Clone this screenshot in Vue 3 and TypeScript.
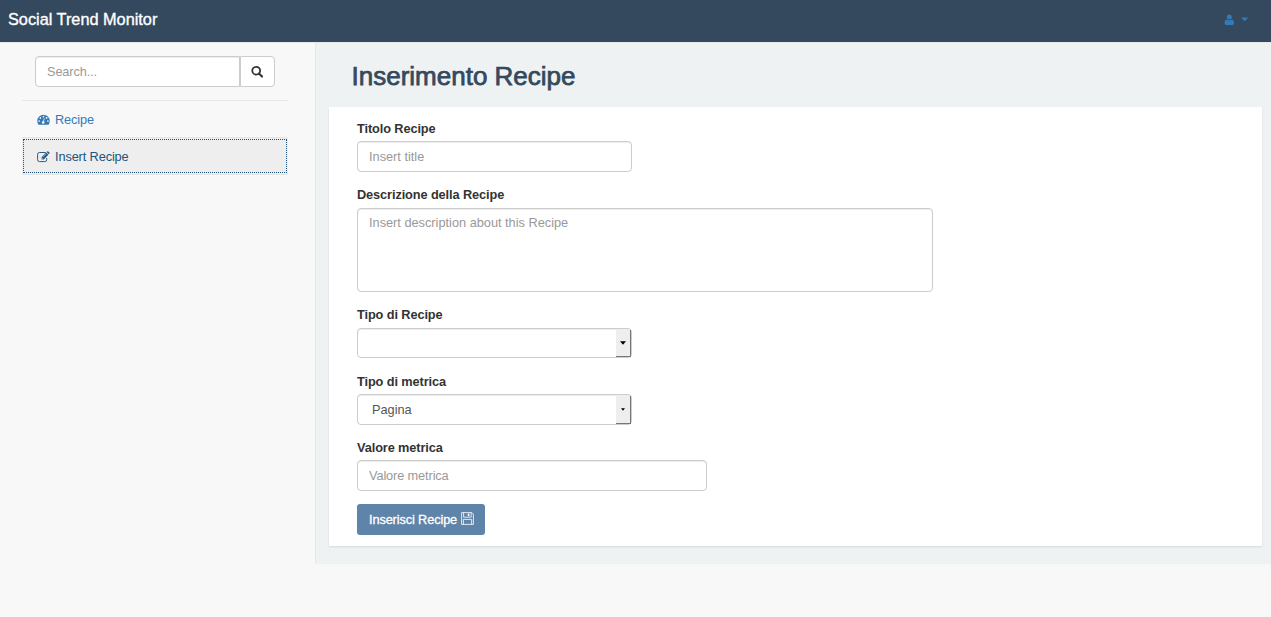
<script setup lang="ts">
import { ref } from 'vue'

const search = ref('')
const title = ref('')
const description = ref('')
const metricValue = ref('')
</script>

<template>
  <div class="page">
    <header class="navbar">
      <a class="brand">Social Trend Monitor</a>
      <a class="user">
        <svg class="user-icon" width="11" height="12" viewBox="0 0 11 12">
          <circle cx="5.3" cy="3" r="2.5" />
          <path d="M2.7 5.4Q5.3 7 7.9 5.4Q10.1 5.8 10.1 9.2Q10.1 11 8.5 11H2.1Q.5 11 .5 9.2Q.5 5.8 2.7 5.4Z" />
        </svg>
        <svg class="caret" width="8" height="5" viewBox="0 0 8 5"><path d="M0 .5H7.4L3.7 4.3Z" /></svg>
      </a>
    </header>
    <div class="body">
      <aside class="sidebar">
        <div class="search">
          <input v-model="search" class="control" type="text" placeholder="Search..." />
          <button class="search-btn" type="button" aria-label="Search">
            <svg width="13" height="13" viewBox="0 0 13 13">
              <circle cx="5.2" cy="5.7" r="3.9" fill="none" stroke="#333" stroke-width="1.8" />
              <path d="M8 8.6L11 11.6" stroke="#333" stroke-width="2.1" stroke-linecap="round" />
            </svg>
          </button>
        </div>
        <nav class="menu">
          <a class="item">
            <svg width="13" height="12" viewBox="0 0 13 12">
              <path fill="#337ab7" d="M6.5.8A6.2 6.2 0 0 0 .3 7Q.3 9 1.3 10.4Q1.5 10.7 1.9 10.7H11.1Q11.5 10.7 11.7 10.4Q12.7 9 12.7 7A6.2 6.2 0 0 0 6.5.8Z" />
              <g fill="#f8f8f8">
                <circle cx="2.1" cy="7" r=".85" /><circle cx="3.4" cy="3.9" r=".85" />
                <circle cx="6.5" cy="2.6" r=".85" /><circle cx="9.6" cy="3.9" r=".85" />
                <circle cx="10.9" cy="7" r=".85" /><circle cx="6.2" cy="8.4" r="1.3" />
              </g>
              <path d="M6.3 8.2L7.2 4.8" stroke="#f8f8f8" stroke-width=".8" stroke-linecap="round" />
            </svg>
            <span>Recipe</span>
          </a>
          <a class="item active">
            <svg width="13" height="12" viewBox="0 0 13 12">
              <path d="M8.4 1.5H2.5Q.6 1.5.6 3.4V8.7Q.6 10.6 2.5 10.6H7.8Q9.7 10.6 9.7 8.7V7.4" fill="none" stroke="#23527c" stroke-width=".95" stroke-linecap="round" />
              <path fill="#23527c" d="M4.6 8.4V6.2L9.2 1.6L11.3 3.7L6.7 8.4ZM9.7 1.1L10.3.5Q10.8.1 11.3.5L12.4 1.6Q12.8 2.1 12.4 2.6L11.8 3.2Z" />
              <path d="M5.2 6.8V7.8H6.2M6.2 6L9.2 3" fill="none" stroke="#eee" stroke-width=".6" />
            </svg>
            <span>Insert Recipe</span>
          </a>
        </nav>
      </aside>
      <main class="main">
        <h1>Inserimento Recipe</h1>
        <form class="card" @submit.prevent>
          <div class="group">
            <label class="low" for="title">Titolo Recipe</label>
            <input id="title" v-model="title" class="control w-small" type="text" placeholder="Insert title" />
          </div>
          <div class="group">
            <label for="description">Descrizione della Recipe</label>
            <textarea id="description" v-model="description" class="control area" placeholder="Insert description about this Recipe"></textarea>
          </div>
          <div class="group">
            <label>Tipo di Recipe</label>
            <div class="control select short" role="combobox" tabindex="0">
              <span></span>
              <i class="arrow"><svg width="6" height="4" viewBox="0 0 6 4"><path d="M0 .3H6L3 3.7Z" /></svg></i>
            </div>
          </div>
          <div class="group tight">
            <label class="low">Tipo di metrica</label>
            <div class="control select" role="combobox" tabindex="0">
              <span>Pagina</span>
              <i class="arrow"><svg width="4" height="3" viewBox="0 0 4 3"><path d="M0 .2H4L2 2.8Z" /></svg></i>
            </div>
          </div>
          <div class="group tight">
            <label class="low" for="metric">Valore metrica</label>
            <input id="metric" v-model="metricValue" class="control w-medium" type="text" placeholder="Valore metrica" />
          </div>
          <button class="submit" type="submit">
            <span>Inserisci Recipe</span>
            <svg width="13" height="13" viewBox="0 0 13 13" fill="none" stroke="#fff" stroke-width=".8">
              <path d="M.6.6H10.8L12.4 2.2V12.4H.6ZM2.6.6V5.2H10.2V.6M2.4 12.4V7.4H10.6V12.4" />
              <path d="M6.8 1.5H8.4V4.1H6.8Z" fill="#fff" stroke="none" />
            </svg>
          </button>
        </form>
      </main>
    </div>
  </div>
</template>

<style>
body { margin: 0; background: #f8f8f8; }
</style>

<style scoped>
* { box-sizing: border-box; }
.page {
  min-height: 617px;
  background: #f8f8f8;
  color: #333;
  font: 12.75px/18px "Liberation Sans", Arial, sans-serif;
}
.navbar {
  height: 43px;
  padding: 0 22px 3px 8px;
  display: flex;
  align-items: center;
  justify-content: space-between;
  background: #34495e;
  border-bottom: 1px solid #e7e7e7;
}
.brand { margin-top: -2px; color: #fff; font-size: 16.3px; -webkit-text-stroke: .35px #fff; }
.user { display: flex; align-items: center; gap: 6px; fill: #337ab7; }
.body { display: flex; height: 521px; }
.sidebar { width: 316px; border-right: 1px solid #e7e7e7; padding: 13px 27px 0 22px; }
.search { display: flex; width: 240px; margin: 0 0 13px 13px; }
.control {
  display: block;
  height: 31px;
  margin: 0;
  padding: 0 11px;
  border: 1px solid #ccc;
  border-radius: 4px;
  outline: 0;
  background: #fff;
  box-shadow: inset 0 1px 1px rgba(0, 0, 0, .075);
  color: #555;
  font: inherit;
}
.control::placeholder { color: #999; opacity: 1; }
.search .control { width: 205px; border-radius: 4px 0 0 4px; letter-spacing: -.12px; }
.search-btn {
  width: 35px;
  height: 31px;
  padding: 0;
  display: grid;
  place-items: center;
  background: #fff;
  border: 1px solid #ccc;
  border-radius: 0 4px 4px 0;
}
.menu { border-top: 1px solid #e7e7e7; width: 266px; letter-spacing: -.12px; }
.item {
  height: 36px;
  padding: 1px 0 0 15px;
  display: flex;
  align-items: center;
  gap: 5px;
  color: #337ab7;
}
.item.active {
  position: relative;
  height: 38px;
  padding-top: 1px;
  background: #eee;
  color: #23527c;
  border: solid #e7e7e7;
  border-width: 1px 0;
}
.item.active::after {
  content: "";
  position: absolute;
  inset: 1px;
  border: 1px dotted #23527c;
}
.main { flex: 1; background: #eef2f3; padding: 15px 9px 0 13px; }
h1 {
  margin: 0 0 13px 22.5px;
  font-size: 26px;
  line-height: 36px;
  font-weight: 400;
  color: #34495e;
  -webkit-text-stroke: .75px #34495e;
}
.card {
  height: 439px;
  padding: 12px 28px 0;
  background: #fff;
  box-shadow: 0 1px 2px rgba(0, 0, 0, .1);
}
.group { margin-bottom: 14px; }
.group.tight { margin-bottom: 13px; }
label { display: block; margin-bottom: 4px; font-weight: 700; letter-spacing: -.1px; }
label.low { padding-top: 1px; margin-bottom: 3px; }
.w-small { width: 275px; }
.w-medium { width: 350px; letter-spacing: -.12px; }
.area { width: 576px; height: 84px; padding: 5px 11px; resize: none; }
.select { width: 275px; padding: 0 0 0 14px; display: flex; align-items: center; justify-content: space-between; }
.select.short { height: 30px; }
.arrow {
  align-self: stretch;
  width: 15px;
  margin: 1px 0 0;
  display: grid;
  place-items: center;
  background: #eee;
  border: solid #777;
  border-width: 0 1px 1px 0;
}
.submit {
  width: 128px;
  height: 31px;
  padding: 0 0 0 12px;
  display: flex;
  align-items: center;
  gap: 4px;
  border: 0;
  border-radius: 3px;
  background: #5f84aa;
  color: #fff;
  font: inherit;
}
.submit span { letter-spacing: -.12px; -webkit-text-stroke: .3px #fff; }
.submit svg { margin-top: -2px; }
</style>
